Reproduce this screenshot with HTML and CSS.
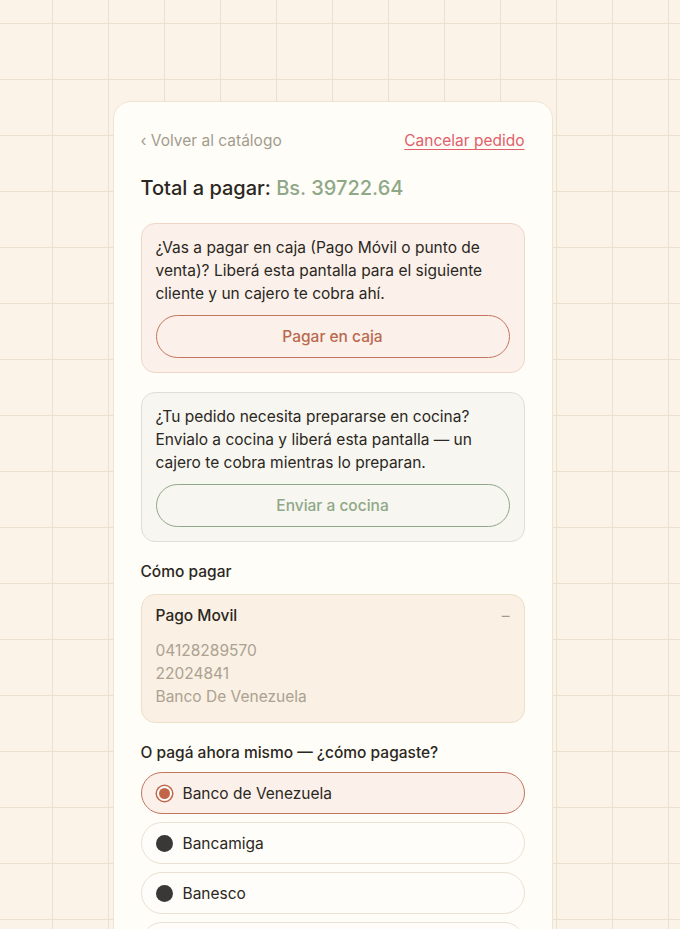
FILE: index.html
```html
<!DOCTYPE html>
<html lang="es">
<head>
  <meta charset="UTF-8" />
  <meta name="viewport" content="width=device-width, initial-scale=1.0"/>
  <title>Pagar pedido</title>
  <link rel="stylesheet" href="styles.css">
</head>
<body>
  <main class="card">
    <div class="top-links">
      <a href="#" class="back">&lsaquo; Volver al catálogo</a>
      <a href="#" class="cancel">Cancelar pedido</a>
    </div>

    <h2 class="total">Total a pagar: <span class="amount">Bs. 39722.64</span></h2>

    <section class="notice notice-caja">
      <p>¿Vas a pagar en caja (Pago Móvil o punto de venta)? Liberá esta pantalla para el siguiente cliente y un cajero te cobra ahí.</p>
      <button class="pill pill-caja">Pagar en caja</button>
    </section>

    <section class="notice notice-cocina">
      <p>¿Tu pedido necesita prepararse en cocina? Envialo a cocina y liberá esta pantalla — un cajero te cobra mientras lo preparan.</p>
      <button class="pill pill-cocina">Enviar a cocina</button>
    </section>

    <h3 class="label">Cómo pagar</h3>
    <div class="method">
      <div class="method-head">
        <span>Pago Movil</span>
        <span class="toggle">&ndash;</span>
      </div>
      <div class="method-body">
        <div>04128289570</div>
        <div>22024841</div>
        <div>Banco De Venezuela</div>
      </div>
    </div>

    <h3 class="label label-options">O pagá ahora mismo — ¿cómo pagaste?</h3>
    <div class="options">
      <label class="option selected"><span class="radio"></span>Banco de Venezuela</label>
      <label class="option"><span class="radio"></span>Bancamiga</label>
      <label class="option"><span class="radio"></span>Banesco</label>
      <label class="option"><span class="radio"></span>Mercantil</label>
    </div>
  </main>
</body>
</html>
```

FILE: styles.css
```css
body {
  margin: 0;
  font-family: Inter, "Liberation Sans", sans-serif;
  color: #2b2722;
  background-color: #fcf3e8;
  background-image:
    linear-gradient(to right, #ecdfcf 1px, transparent 1px),
    linear-gradient(to bottom, #ecdfcf 1px, transparent 1px);
  background-size: 56px 56px;
  background-position: 52px 23px;
  padding: 101px 15px 0 0;
}

.card {
  width: 440px;
  box-sizing: border-box;
  margin: 0 auto;
  background-color: #fffdf8;
  border: 1px solid #efe4d4;
  border-radius: 18px;
  padding: 29px 27px 40px;
}

.top-links {
  display: flex;
  justify-content: space-between;
  font-size: 15.5px;
  line-height: 20px;
}

.top-links a {
  text-decoration: none;
}

.back {
  color: #a39c8e;
}

.cancel {
  color: #e0606a;
  text-decoration: underline !important;
  text-underline-offset: 3px;
  text-decoration-thickness: 1px;
}

.total {
  font-size: 20px;
  font-weight: 500;
  margin: 25px 0 23px;
  line-height: 24px;
}

.amount {
  color: #8fa888;
}

.notice {
  border-radius: 14px;
  padding: 12px 14px 14px;
  margin-bottom: 19px;
}

.notice p {
  margin: 0 0 10px;
  font-size: 15.5px;
  line-height: 23px;
}

.notice-caja {
  background-color: #fbf1ea;
  border: 1px solid #efd6c9;
}

.notice-cocina {
  background-color: #f7f6f0;
  border: 1px solid #dedfd6;
}

.pill {
  display: block;
  width: 100%;
  height: 43px;
  border-radius: 22px;
  background: transparent;
  font-family: inherit;
  font-size: 15.5px;
  font-weight: 500;
}

.pill-caja {
  border: 1px solid #c27660;
  color: #b9694f;
}

.pill-cocina {
  border: 1px solid #8fa888;
  color: #8fa888;
}

.label {
  font-size: 15.5px;
  font-weight: 500;
  line-height: 20px;
  margin: 20px 0 12px;
}

.label-options {
  margin-bottom: 9px;
}

.method {
  background-color: #faf0e3;
  border: 1px solid #eddfc9;
  border-radius: 14px;
  padding: 11px 14px 14px;
  margin-bottom: 20px;
}

.method-head {
  display: flex;
  justify-content: space-between;
  font-size: 15.5px;
  font-weight: 500;
  line-height: 20px;
  margin-bottom: 13px;
}

.toggle {
  color: #a39c8e;
  font-weight: 400;
}

.method-body {
  color: #aba292;
  font-size: 15.5px;
  line-height: 23px;
}

.options {
  display: flex;
  flex-direction: column;
  gap: 8px;
}

.option {
  display: flex;
  align-items: center;
  gap: 10px;
  height: 42px;
  box-sizing: border-box;
  padding: 0 14px;
  border: 1px solid #e8e1d4;
  border-radius: 21px;
  background-color: #fffdf9;
  font-size: 15.5px;
}

.option.selected {
  background-color: #fbf1ea;
  border-color: #c27660;
}

.radio {
  width: 17px;
  height: 17px;
  border-radius: 50%;
  background-color: #3a3836;
  box-sizing: border-box;
}

.selected .radio {
  background-color: #c2664a;
  border: 2px solid #fff;
  box-shadow: 0 0 0 1.5px #c2664a;
  width: 15px;
  height: 15px;
  margin: 0 1px;
}
```
